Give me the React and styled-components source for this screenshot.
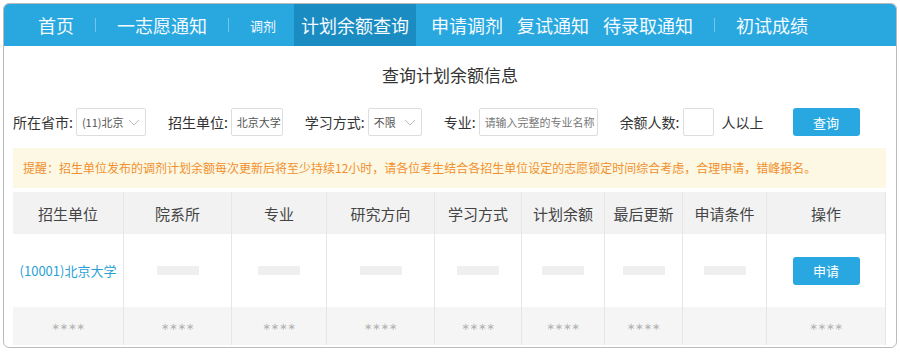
import React from 'react';
import styled, { createGlobalStyle } from 'styled-components';

const GlobalStyle = createGlobalStyle`
  body {
    margin: 0;
    background: #fff;
    font-family: "Noto Sans CJK SC", "Noto Sans", sans-serif;
  }
`;

const Frame = styled.div`
  margin: 3px 0 0 3px;
  width: 894px;
  height: 345px;
  box-sizing: border-box;
  border: 1px solid #bbb;
  border-radius: 6px;
  overflow: hidden;
  background: #fff;
  display: flex;
  flex-direction: column;
`;

const Nav = styled.div`
  display: flex;
  align-items: center;
  height: 42px;
  padding-left: 27px;
  background: #29a8e0;
`;

const NavItem = styled.div`
  display: flex;
  align-items: center;
  height: 100%;
  padding: 0 ${(p) => (p.$small ? '18px' : '7px')} 0 7px;
  margin-right: ${(p) => (p.$active ? '8px' : '0')};
  background: ${(p) => (p.$active ? '#1a8cc2' : 'transparent')};
  color: #f4faff;
  font-size: ${(p) => (p.$small ? '13px' : '18px')};
  white-space: nowrap;
`;

const NavSep = styled.div`
  width: 1px;
  height: 14px;
  margin: 0 14px;
  background: rgba(255, 255, 255, 0.35);
`;

const Title = styled.div`
  margin-top: 17px;
  line-height: 24px;
  text-align: center;
  font-size: 17px;
  color: #333;
`;

const Filter = styled.div`
  display: flex;
  align-items: center;
  gap: 22px;
  height: 30px;
  margin-top: 20px;
  padding-left: 9px;
`;

const Field = styled.div`
  display: flex;
  align-items: center;
  gap: 3px;
`;

const Label = styled.span`
  font-size: 14px;
  color: #333;
  white-space: nowrap;
`;

const Unit = styled.span`
  margin-left: 5px;
  font-size: 14px;
  color: #333;
`;

const Box = styled.div`
  display: flex;
  align-items: center;
  justify-content: space-between;
  box-sizing: border-box;
  width: ${(p) => p.$w}px;
  height: 28px;
  padding: 0 5px;
  border: 1px solid #ddd;
  border-radius: 2px;
  font-size: 11px;
  color: ${(p) => (p.$placeholder ? '#777' : '#555')};
  white-space: nowrap;
  overflow: hidden;
`;

const Button = styled.button`
  width: 67px;
  height: 28px;
  border: none;
  border-radius: 3px;
  background: #29a7e0;
  color: #fff;
  font-family: inherit;
  font-size: 13px;
  margin-left: ${(p) => p.$ml || 0}px;
  cursor: pointer;
`;

const Notice = styled.div`
  margin: 11px 10px 0 9px;
  height: 40px;
  line-height: 40px;
  padding-left: 10px;
  background: #fdf8e3;
  color: #f0902f;
  font-size: 12px;
  white-space: nowrap;
`;

const Table = styled.div`
  margin: 4px 10px 0 9px;
`;

const Row = styled.div`
  display: grid;
  grid-template-columns: 111px 108px 95px 108px 87px 83px 78px 84px 119px;
  height: ${(p) => p.$h}px;
  background: ${(p) => p.$bg};
`;

const Cell = styled.div`
  display: flex;
  align-items: center;
  justify-content: center;
  box-sizing: border-box;
  border-right: 1px solid #e6e6e6;
  font-size: ${(p) => p.$size || 13}px;
  color: ${(p) => p.$color || '#444'};
  white-space: nowrap;
`;

const Stars = styled.span`
  font-family: "DejaVu Sans", sans-serif;
  font-size: 10px;
  color: #b0b0b0;
`;

const Bar = styled.div`
  width: 42px;
  height: 9px;
  background: #efefef;
  border-radius: 1px;
`;

const Chevron = () => (
  <svg width="12" height="7" viewBox="0 0 12 7">
    <polyline points="1,1 6,6 11,1" fill="none" stroke="#bbb" strokeWidth="1" />
  </svg>
);

const headers = ['招生单位', '院系所', '专业', '研究方向', '学习方式', '计划余额', '最后更新', '申请条件', '操作'];

export default function App() {
  return (
    <>
      <GlobalStyle />
      <Frame>
        <Nav>
          <NavItem>首页</NavItem>
          <NavSep />
          <NavItem>一志愿通知</NavItem>
          <NavSep />
          <NavItem $small>调剂</NavItem>
          <NavItem $active>计划余额查询</NavItem>
          <NavItem>申请调剂</NavItem>
          <NavItem>复试通知</NavItem>
          <NavItem>待录取通知</NavItem>
          <NavSep />
          <NavItem>初试成绩</NavItem>
        </Nav>

        <Title>查询计划余额信息</Title>

        <Filter>
          <Field>
            <Label>所在省市:</Label>
            <Box $w={70}>(11)北京<Chevron /></Box>
          </Field>
          <Field>
            <Label>招生单位:</Label>
            <Box $w={52}>北京大学</Box>
          </Field>
          <Field>
            <Label>学习方式:</Label>
            <Box $w={54}>不限<Chevron /></Box>
          </Field>
          <Field>
            <Label>专业:</Label>
            <Box $w={119} $placeholder>请输入完整的专业名称</Box>
          </Field>
          <Field>
            <Label>余额人数:</Label>
            <Box $w={31} />
            <Unit>人以上</Unit>
            <Button $ml={26}>查询</Button>
          </Field>
        </Filter>

        <Notice>
          提醒：招生单位发布的调剂计划余额每次更新后将至少持续12小时，请各位考生结合各招生单位设定的志愿锁定时间综合考虑，合理申请，错峰报名。
        </Notice>

        <Table>
          <Row $h={42} $bg="#f2f2f2">
            {headers.map((h) => (
              <Cell key={h} $size={15}>{h}</Cell>
            ))}
          </Row>
          <Row $h={73} $bg="#fff">
            <Cell $color="#2a9fd6">(10001)北京大学</Cell>
            {[0, 1, 2, 3, 4, 5, 6].map((i) => (
              <Cell key={i}><Bar /></Cell>
            ))}
            <Cell><Button>申请</Button></Cell>
          </Row>
          <Row $h={38} $bg="#f5f5f5">
            {headers.map((h, i) => (
              <Cell key={h}>{i === 7 ? null : <Stars>∗∗∗∗</Stars>}</Cell>
            ))}
          </Row>
        </Table>
      </Frame>
    </>
  );
}
